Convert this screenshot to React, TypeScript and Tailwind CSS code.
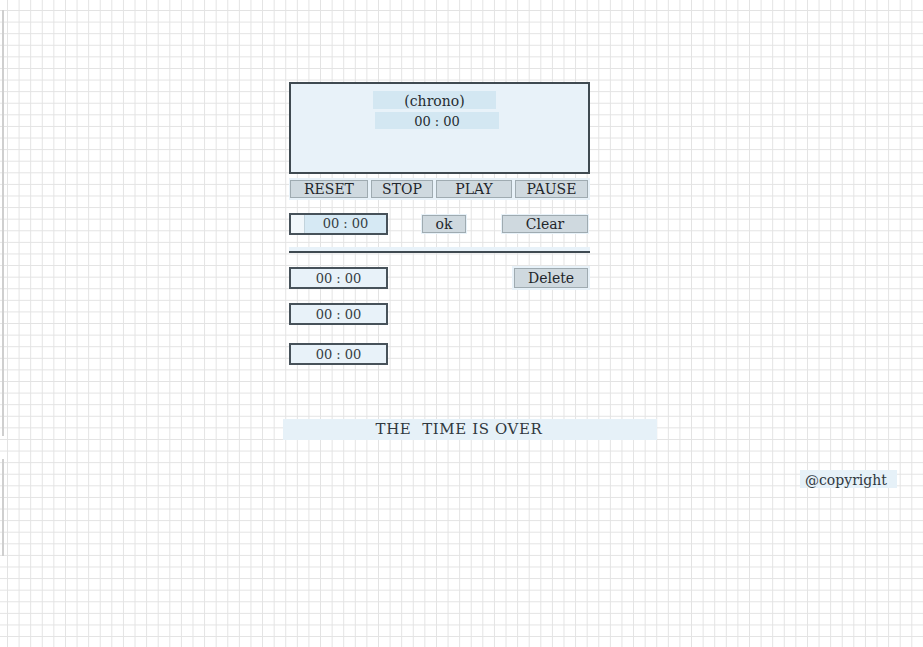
const serif = "font-['DejaVu_Serif',serif]";

function Btn({ label, w }: { label: string; w: string }) {
  return (
    <button
      className={`${w} h-[18px] bg-[#cfd9df] border border-[#9fabb1] text-[14px] leading-none text-[#1f262b] flex items-center justify-center`}
    >
      {label}
    </button>
  );
}

function TimeBox({ inputLike }: { inputLike?: boolean }) {
  return (
    <div className="w-[99px] h-[22px] border-2 border-[#47525a] bg-[#e8f2f9] flex items-end justify-center text-[13px] leading-none text-[#353d43]">
      {inputLike ? (
        <div className="flex h-full w-full">
          <div className="w-[14px] h-full bg-[#f1f7fb] border-r border-[#c2d3dc]" />
          <div className="flex-1 h-full bg-[#d6e9f4] flex items-end justify-center pb-[3px]">
            00 : 00
          </div>
        </div>
      ) : (
        <span className="pb-[2px]">00 : 00</span>
      )}
    </div>
  );
}

export default function App() {
  return (
    <div
      className={`min-h-screen w-full flex bg-white ${serif} text-[#2c3338] bg-[linear-gradient(to_right,#e3e3e3_1px,transparent_1px),linear-gradient(to_bottom,#e3e3e3_1px,transparent_1px)] bg-[size:11.6px_11.6px] bg-[position:7px_10px]`}
    >
      <aside className="w-[4px] flex flex-col pl-[2px]">
        <div className="mt-[10px] h-[426px] border-l-2 border-[#cfcfcf]" />
        <div className="mt-[23px] h-[97px] border-l-2 border-[#cfcfcf]" />
      </aside>

      <main className="flex-1 flex flex-col">
        <section className="ml-[285px] mt-[82px] w-[301px] flex flex-col">
          <div className="h-[92px] border-2 border-[#3f4a51] bg-[#e8f2f9] flex flex-col pt-[7px]">
            <div className="ml-[82px] w-[123px] h-[18px] bg-[#d3e7f2] flex items-center justify-center pt-[1px] text-[14px] leading-none text-[#252c31]">
              (chrono)
            </div>
            <div className="ml-[84px] mt-[3px] w-[124px] h-[17px] bg-[#d3e7f2] flex items-center justify-center pt-[1px] text-[13px] leading-none text-[#252c31]">
              00 : 00
            </div>
          </div>

          <div className="mt-[4px] bg-[#e8f2f9] px-[1px] py-[2px] flex gap-[3px]">
            <Btn label="RESET" w="w-[78px]" />
            <Btn label="STOP" w="w-[62px]" />
            <Btn label="PLAY" w="w-[76px]" />
            <Btn label="PAUSE" w="w-[73px]" />
          </div>

          <div className="mt-[13px] flex items-center">
            <TimeBox inputLike />
            <div className="ml-[33px] p-[1px] bg-[#e8f2f9]">
              <Btn label="ok" w="w-[44px]" />
            </div>
            <div className="ml-[34px] p-[1px] bg-[#e8f2f9]">
              <Btn label="Clear" w="w-[86px]" />
            </div>
          </div>

          <div className="mt-[12px] h-[6px] bg-[#e8f2f9] border-b-2 border-[#3f4a51]" />

          <div className="mt-[14px] flex flex-col">
            <div className="flex items-start justify-between">
              <TimeBox />
              <div className="p-[2px] -mt-[1px] bg-[#e8f2f9]">
                <Btn label="Delete" w="w-[74px] h-[20px]" />
              </div>
            </div>
            <div className="mt-[13px]">
              <TimeBox />
            </div>
            <div className="mt-[18px]">
              <TimeBox />
            </div>
          </div>
        </section>

        <div className="ml-[279px] mt-[54px] w-[374px] h-[21px] bg-[#e6f1f8] flex items-center justify-center pr-[22px] text-[15px] tracking-[0.6px] leading-none text-[#30383e]">
          THE&nbsp; TIME IS OVER
        </div>

        <footer className="self-end mr-[26px] mt-[30px] w-[97px] h-[18px] bg-[#e6f1f8] flex items-center pl-[5px] pt-[1px] text-[14px] leading-none text-[#30383e]">
          @copyright
        </footer>
      </main>
    </div>
  );
}
